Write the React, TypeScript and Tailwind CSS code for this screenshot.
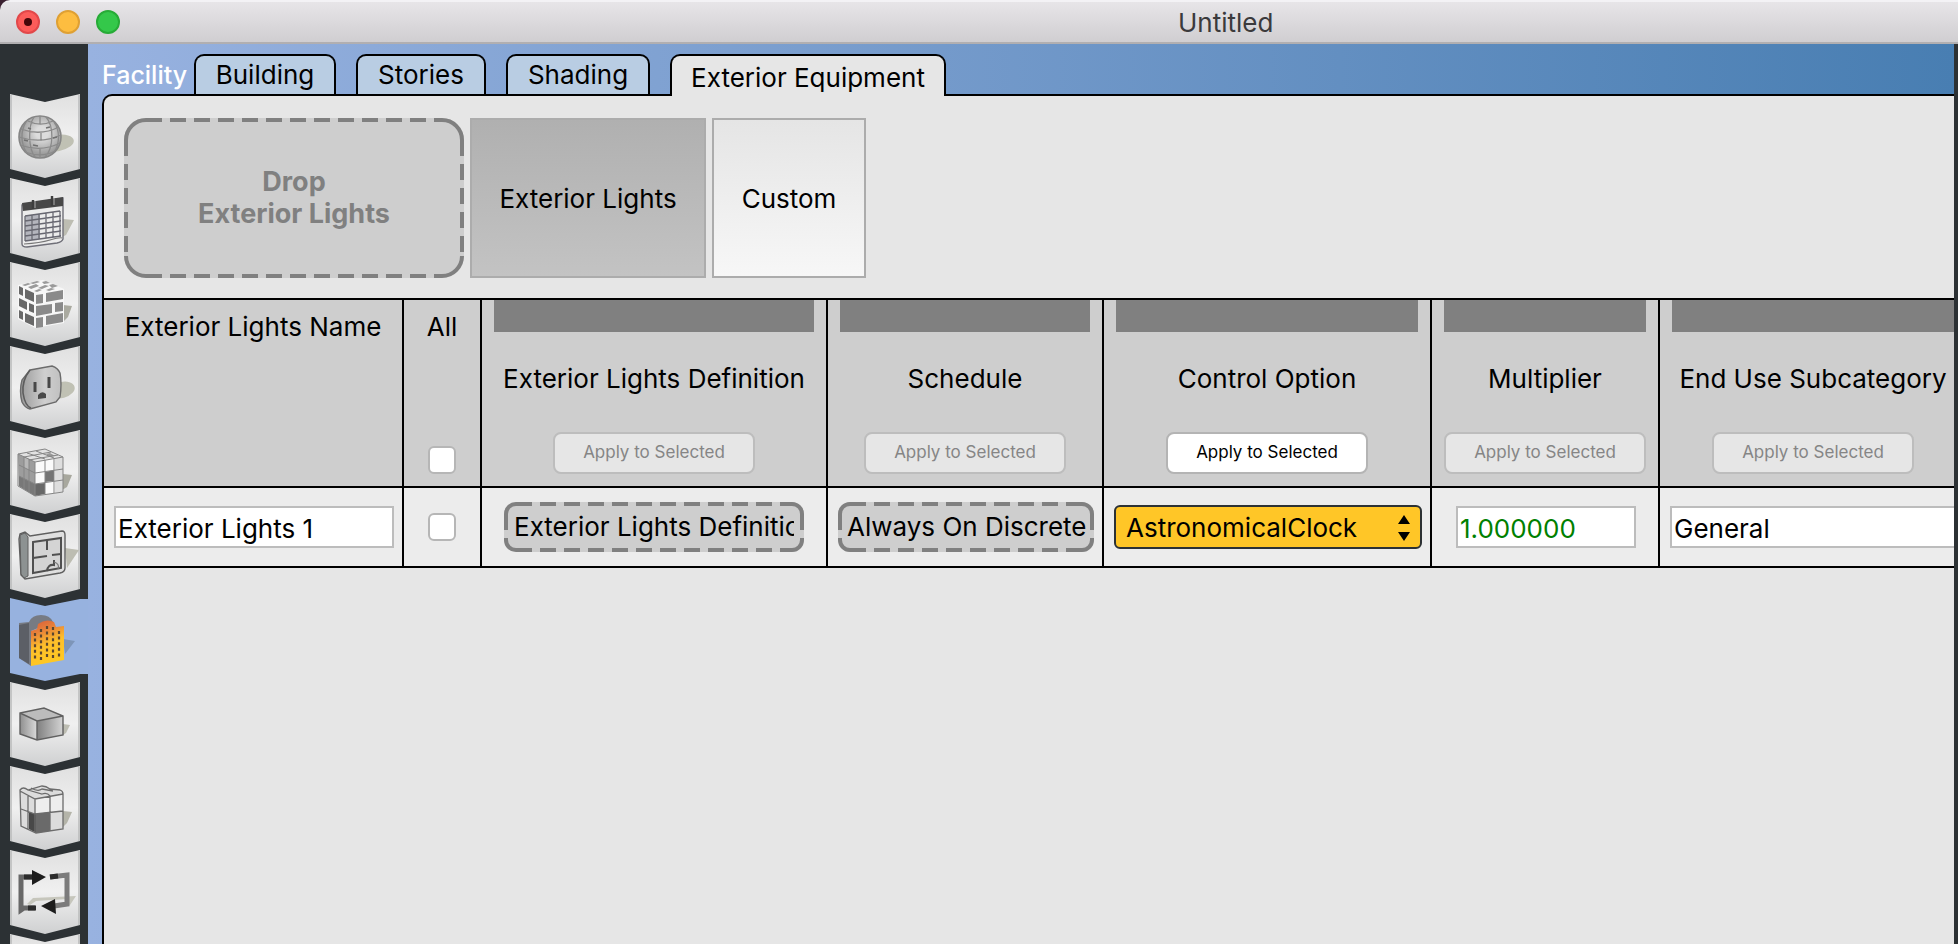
import type { ReactNode } from "react";

const GRAY = "#808080";

function DashedFrame({ w, h, r }: { w: number; h: number; r: number }) {
  const c = r + 2;
  const dash = `M${c} 2H${w - c}M${c} ${h - 2}H${w - c}`;
  const sides = `M2 ${c}V${h - c}M${w - 2} ${c}V${h - c}`;
  const arcs =
    `M2 ${c}A${r} ${r} 0 0 1 ${c} 2` +
    `M${w - c} 2A${r} ${r} 0 0 1 ${w - 2} ${c}` +
    `M${w - 2} ${h - c}A${r} ${r} 0 0 1 ${w - c} ${h - 2}` +
    `M${c} ${h - 2}A${r} ${r} 0 0 1 2 ${h - c}`;
  return (
    <svg className="pointer-events-none absolute inset-0" width={w} height={h} viewBox={`0 0 ${w} ${h}`} fill="none" stroke={GRAY} strokeWidth="4" aria-hidden="true">
      <path d={dash} strokeDasharray="16 8" />
      <path d={sides} strokeDasharray="16 8" />
      <path d={arcs} />
    </svg>
  );
}

const Shadow = ({ d, fill = "#bdbdb2" }: { d: string; fill?: string }) => <path d={d} fill={fill} />;

function SiteIcon() {
  return (
    <g>
      <ellipse cx="58" cy="49" rx="16" ry="8" fill="#c0c1b4" transform="rotate(-10 58 49)" />
      <circle cx="40" cy="43" r="21" fill="url(#ball)" stroke="#858585" strokeWidth="1.6" />
      <path
        d="M34 23C28 32 28 54 35 63M46 23C54 32 54 54 45 63M26 28C20 38 21 51 27 59M54 28C60 36 60 50 54 58M28 27C36 31 45 31 53 27M21 35C34 40 47 39 59 33M19 43C34 48 48 47 61 41M20 51C34 56 48 55 60 49M25 58C36 62 46 62 55 57M40 22V30M41 39V47M40 55V64"
        fill="none"
        stroke="#8a8a8a"
        strokeWidth="1.3"
      />
      <path d="M28 34L31 35M46 34L50 33M24 46L28 47M53 44L57 43M33 51L38 52" stroke="#707070" strokeWidth="1.5" />
    </g>
  );
}

function ScheduleIcon() {
  return (
    <g>
      <Shadow d="M63 41L74 42L66 57L62 59Z" />
      <path d="M22 27L63 20L63 61Q62 64 57 65L27 69Q22 69 22 66Z" fill="#ececec" stroke="#6f6f78" strokeWidth="1.4" />
      <path d="M22 25L63 19L63 28L23 33Z" fill="#484848" />
      <path d="M25 38L40 36V61L25 63Z" fill="#b4b5bd" />
      <path d="M25 38L60 33M25 43L61 38M25 48L61 43M25 53L61 48M25 58L61 53M25 63L61 58M25 38V63M32 37V62M39 36V61M46 35V60M53 34V60M60 33V59" stroke="#686872" strokeWidth="1.3" fill="none" />
      <path d="M24 66Q40 65 50 62T62 60" stroke="#777" strokeWidth="1.2" fill="none" />
      <path d="M33 22V31M52 18V28" stroke="#3d3d3d" strokeWidth="2.4" />
      <path d="M35 23V30M54 20V27" stroke="#9b9b9b" strokeWidth="1.2" />
    </g>
  );
}

function BricksIcon() {
  return (
    <g>
      <Shadow d="M63 43L72 44L68 55L62 61Z" fill="#aaaaa0" />
      <path d="M18 23L43 18L64 27V61L35 66L18 57Z" fill="#f7f7f7" />
      <path d="M19 24L23 26V34L19 32ZM25 27L34 31V40L25 36ZM19 36L27 40V48L19 44ZM29 41L34 43V51L29 49ZM19 48L23 50V58L19 56ZM25 51L34 55V64L25 60Z" fill="#686868" />
      <path d="M36 33L43 32V41L36 42ZM46 31L63 28V37L46 40ZM36 44L52 42V51L36 54ZM55 41L63 40V49L55 50ZM36 56L43 55V65L36 66ZM46 54L63 51V60L46 63Z" fill="#8a8a8a" />
      <path d="M22 23L28 21L31 22L25 24ZM30 21L37 19L40 20L33 22ZM28 25L36 22L39 24L31 27ZM42 20L46 19L50 21L44 22ZM38 26L45 23L49 24L42 27ZM49 23L53 22L58 24L52 26ZM34 29L39 27L42 28L37 30ZM46 28L51 26L55 27L49 29Z" fill="#9a9a9a" />
    </g>
  );
}

function OutletIcon() {
  return (
    <g>
      <ellipse cx="62" cy="44" rx="13" ry="8" fill="#c0c1b4" transform="rotate(-15 62 44)" />
      <path d="M30 24L52 20Q58 22 60 27Q62 38 60 51L56 56L30 63Q25 62 22 56Q19 45 22 34Z" fill="url(#plate)" stroke="#6b6b6b" strokeWidth="1.4" />
      <path d="M30 24Q22 34 23 47Q25 60 31 62" fill="none" stroke="#5c5c5c" strokeWidth="1.6" />
      <path d="M35 36V46M49 31V42" stroke="#484848" strokeWidth="3" />
      <path d="M38 53V49Q42 44 46 48V52Z" fill="#4a4a4a" />
    </g>
  );
}

function LoadsIcon() {
  return (
    <g>
      <Shadow d="M63 44L72 45L67 57L62 60Z" fill="#a8a89e" />
      <path d="M18 24L45 19L63 27L35 32Z" fill="#e2e2e2" />
      <path d="M18 24L35 32V66L19 56Z" fill="#9d9d9d" />
      <path d="M19 46L35 54V66L19 56Z" fill="#787878" />
      <path d="M24 27L29 29V40L24 38Z" fill="#b7b7b7" />
      <path d="M35 32L63 27V62L35 66Z" fill="#fafafa" />
      <path d="M55 28L63 27V62L55 63Z" fill="#dedede" />
      <path d="M45 42L54 40V51L45 52Z" fill="#747474" />
      <path d="M35 54L45 53V64L35 66Z" fill="#686868" />
      <path d="M46 24L50 23L55 26L50 27Z" fill="#999" />
      <path d="M18 24L45 19L63 27L35 32ZM18 24V56L35 66L63 62V27M35 32V66M24 27V59M29 29V62M19 35L35 43L63 39M19 46L35 54L63 50M45 30V64M54 29V63M27 23L45 29M36 21L54 28M24 27L51 22M29 30L58 25" fill="none" stroke="#858585" strokeWidth="1" />
    </g>
  );
}

function SpacesIcon() {
  return (
    <g>
      <Shadow d="M65 34L79 36L67 54Z" />
      <path d="M20 20L25 18L30 22L62 17Q65 17 65 21V54Q65 58 60 59L25 65L21 61L19 25Z" fill="#dfdfdf" stroke="#5f5f5f" strokeWidth="1.4" />
      <path d="M20 21L25 19L28 23V62L24 64L21 60Z" fill="#8d9292" stroke="#5e5e5e" strokeWidth="1" />
      <path d="M33 28L61 24V54L33 59Z" fill="#d4d4d4" stroke="#505050" strokeWidth="2" />
      <path d="M47 26V36M33 44L47 42M52 41L61 40M47 57Q48 50 54 51V46" fill="none" stroke="#505050" strokeWidth="2" />
      <path d="M54 48Q60 50 58 55" fill="none" stroke="#777" strokeWidth="1.2" />
    </g>
  );
}

function FacilityIcon() {
  return (
    <g>
      <Shadow d="M63 41L75 43L65 56Z" fill="#7d95b8" />
      <path d="M19 25L29 24Q32 17 41 17Q50 17 53 24L45 27L31 33V68L19 60Z" fill="#777b83" />
      <path d="M19 27L29 25L29 66L19 60Z" fill="#5c5f66" />
      <path d="M31 33L37 31L38 26Q46 20 54 24L56 29L64 28V62L31 68Z" fill="url(#fac)" />
      <path d="M35 35V63M41 31V62M47 28V61M53 29V60M59 33V59" stroke="#5a4630" strokeWidth="2.2" strokeDasharray="3 2.6" />
    </g>
  );
}

function ZonesBoxIcon() {
  return (
    <g>
      <Shadow d="M63 42L70 43L66 51L63 53Z" />
      <path d="M20 31L44 26L63 34L37 39Z" fill="#bcbcbc" />
      <path d="M20 31L37 39V58L20 52Z" fill="url(#boxl)" />
      <path d="M37 39L63 34V53L37 58Z" fill="url(#boxr)" />
      <path d="M20 31L44 26L63 34V53L37 58L20 52ZM20 31L37 39L63 34M37 39V58" fill="none" stroke="#606060" strokeWidth="1.4" />
    </g>
  );
}

function ThermalIcon() {
  return (
    <g>
      <Shadow d="M63 45L72 46L67 57L62 62Z" fill="#b4b4a9" />
      <path d="M20 24L43 20L63 27V63L36 67L21 60Z" fill="#dcdcdc" />
      <path d="M35 33L63 28V45L35 48Z" fill="#eee" />
      <path d="M29 46L36 48V67L29 63Z" fill="#484848" />
      <path d="M36 48L50 46V65L36 67Z" fill="#6a6a6a" />
      <path d="M20 24Q23 20 28 24L42 20Q46 20 50 23L60 24Q63 25 63 28V63L36 67L21 60ZM20 25L35 33L63 28M35 33V67M50 30V65M21 43L35 48L63 45M28 29V63M28 24L42 28Q47 26 50 30M31 22Q38 26 42 23L53 25" fill="none" stroke="#6c6c6c" strokeWidth="1.3" />
    </g>
  );
}

function HvacIcon() {
  return (
    <g>
      <path d="M27 54L33 48L76 46L70 55L66 54L68 49L36 51L30 55Z" fill="#c6c6bc" />
      <path d="M34 27H21V60L24 58H35" fill="none" stroke="#686868" strokeWidth="5" />
      <path d="M50 27L67 25V54L54 56" fill="none" stroke="#7b7b7b" strokeWidth="5" />
      <path d="M50 27L58 26M28 58H36M24 27H33" stroke="#2c2c2c" strokeWidth="5" />
      <path d="M32 20L46 27L32 35ZM55 49L41 56L56 64Z" fill="#1d1d1d" />
    </g>
  );
}

const tiles: { label: string; icon: ReactNode; active?: boolean }[] = [
  { label: "Site", icon: <SiteIcon /> },
  { label: "Schedules", icon: <ScheduleIcon /> },
  { label: "Constructions", icon: <BricksIcon /> },
  { label: "Loads", icon: <OutletIcon /> },
  { label: "Space Types", icon: <LoadsIcon /> },
  { label: "Geometry", icon: <SpacesIcon /> },
  { label: "Facility", icon: <FacilityIcon />, active: true },
  { label: "Spaces", icon: <ZonesBoxIcon /> },
  { label: "Thermal Zones", icon: <ThermalIcon /> },
  { label: "HVAC Systems", icon: <HvacIcon /> },
  { label: "Output Variables", icon: null },
];

function Gradients() {
  return (
    <svg width="0" height="0" className="absolute" aria-hidden="true">
      <defs>
        <linearGradient id="tile" x1="0" y1="0" x2="0" y2="1">
          <stop offset="0" stopColor="#e0e0e0" />
          <stop offset="0.5" stopColor="#f0f0f0" />
          <stop offset="1" stopColor="#cfd0d1" />
        </linearGradient>
        <radialGradient id="ball" cx="0.55" cy="0.4">
          <stop offset="0.3" stopColor="#dcdcdc" />
          <stop offset="1" stopColor="#9d9d9d" />
        </radialGradient>
        <linearGradient id="plate">
          <stop offset="0" stopColor="#9a9a9a" />
          <stop offset="0.6" stopColor="#cfcfcf" />
          <stop offset="1" stopColor="#c0c0c0" />
        </linearGradient>
        <linearGradient id="fac" x1="0" y1="0" x2="0.3" y2="1">
          <stop offset="0.05" stopColor="#d8603c" />
          <stop offset="0.3" stopColor="#e8823a" />
          <stop offset="0.6" stopColor="#fdbf2b" />
          <stop offset="1" stopColor="#ffc823" />
        </linearGradient>
        <linearGradient id="boxl">
          <stop offset="0" stopColor="#8f8f8f" />
          <stop offset="1" stopColor="#dadada" />
        </linearGradient>
        <linearGradient id="boxr">
          <stop offset="0" stopColor="#808080" />
          <stop offset="1" stopColor="#d4d4d4" />
        </linearGradient>
      </defs>
    </svg>
  );
}

function Sidebar() {
  return (
    <nav aria-label="Model sections" className="flex w-[88px] shrink-0 flex-col overflow-hidden bg-[#2c3134] pt-[50px]">
      <Gradients />
      {tiles.map((t) => (
        <button key={t.label} type="button" aria-label={t.label} className="block shrink-0">
          <svg width="88" height="84" viewBox="0 0 88 84" className="block" aria-hidden="true">
            {t.active ? (
              <path d="M10 0L45 8L80 1H88V76H80L45 83L10 75Z" fill="#97b2df" />
            ) : (
              <>
                <path d="M10 0L45 8L80 0V75L45 84L10 75Z" fill="url(#tile)" />
                <path d="M11 1V75M79 1V75" stroke="#b9babb" strokeWidth="1.5" />
              </>
            )}
            {t.icon}
          </svg>
        </button>
      ))}
    </nav>
  );
}

const tabs = [
  { label: "Building", width: "w-[142px]" },
  { label: "Stories", width: "w-[130px]" },
  { label: "Shading", width: "w-[144px]" },
];

function Tabs() {
  return (
    <div className="flex h-[50px] items-end pl-[14px]">
      <h1 className="h-[40px] w-[92px] text-[25px] leading-[42px] font-medium text-white">Facility</h1>
      <div role="tablist" className="flex items-end gap-[20px]">
        {tabs.map((t) => (
          <button
            key={t.label}
            type="button"
            role="tab"
            aria-selected="false"
            className={`${t.width} h-[40px] rounded-t-[10px] border-2 border-b-0 border-black bg-[#b9cde3] leading-[38px]`}
          >
            {t.label}
          </button>
        ))}
        <button
          type="button"
          role="tab"
          aria-selected="true"
          className="relative -mb-[2px] h-[42px] w-[276px] rounded-t-[10px] border-2 border-b-0 border-black bg-[#e6e6e6] pt-[2px] leading-[40px]"
        >
          Exterior Equipment
        </button>
      </div>
    </div>
  );
}

const columns = [
  { label: "Exterior Lights Definition", enabled: false },
  { label: "Schedule", enabled: false },
  { label: "Control Option", enabled: true },
  { label: "Multiplier", enabled: false },
  { label: "End Use Subcategory", enabled: false },
];

const CHECK = "block size-[28px] appearance-none rounded-[6px] border-2 border-[#b6b6b6] bg-white";
const FIELD = "block h-[42px] border-2 border-[#bcbcbc] bg-white px-[2px] pt-[2px] outline-none";
const CELL = "border-r-2 border-b-2 border-black p-0";

function LightsTable() {
  return (
    <table className="w-full min-w-[1864px] table-fixed border-separate border-spacing-0">
      <colgroup>
        <col className="w-[300px]" />
        <col className="w-[78px]" />
        <col className="w-[346px]" />
        <col className="w-[276px]" />
        <col className="w-[328px]" />
        <col className="w-[228px]" />
        <col />
      </colgroup>
      <thead>
        <tr className="bg-[#cecece] align-top">
          <th scope="col" className={`${CELL} font-normal`}>
            <div className="pt-[11px]">Exterior Lights Name</div>
          </th>
          <th scope="col" className={`${CELL} font-normal`}>
            <label className="flex h-[186px] flex-col items-center justify-between pt-[11px] pb-[12px]">
              All
              <input type="checkbox" className={CHECK} />
            </label>
          </th>
          {columns.map((c) => (
            <th key={c.label} scope="col" className={`${CELL} font-normal`}>
              <div className="flex h-[186px] flex-col items-center px-[12px] pb-[12px]">
                <div className="h-[32px] w-full bg-[#808080]" />
                <span className="mt-[31px] whitespace-nowrap">{c.label}</span>
                <button
                  type="button"
                  disabled={!c.enabled}
                  className="mt-auto h-[42px] w-[202px] rounded-[8px] border-2 border-[#b4b4b4] bg-white pb-[2px] text-[17px] leading-[34px] text-black disabled:border-[#bdbdbd] disabled:bg-[#e6e6e6] disabled:text-[#858585]"
                >
                  Apply to Selected
                </button>
              </div>
            </th>
          ))}
        </tr>
      </thead>
      <tbody>
        <tr className="h-[80px] bg-[#ececec]">
          <td className={`${CELL} pl-[10px]`}>
            <input aria-label="Exterior Lights Name" defaultValue="Exterior Lights 1" className={`${FIELD} w-[280px]`} />
          </td>
          <td className={`${CELL} pl-[24px]`}>
            <input type="checkbox" aria-label="Select Exterior Lights 1" className={CHECK} />
          </td>
          <td className={`${CELL} pl-[22px]`}>
            <div className="relative h-[50px] w-[300px] rounded-[12px] bg-[#cecece] px-[10px]">
              <DashedFrame w={300} h={50} r={10} />
              <div className="overflow-hidden leading-[50px] whitespace-nowrap">Exterior Lights Definition</div>
            </div>
          </td>
          <td className={`${CELL} pl-[10px]`}>
            <div className="relative h-[50px] w-[256px] rounded-[12px] bg-[#cecece] pr-[4px] pl-[9px]">
              <DashedFrame w={256} h={50} r={10} />
              <div className="overflow-hidden leading-[50px] whitespace-nowrap">Always On Discrete</div>
            </div>
          </td>
          <td className={`${CELL} pl-[10px]`}>
            <div className="relative w-[308px]">
              <select
                aria-label="Control Option"
                className="block h-[44px] w-full appearance-none rounded-[6px] border-2 border-[#2c3134] bg-[#ffc627] pt-[2px] pl-[10px] text-black outline-none"
              >
                <option>AstronomicalClock</option>
                <option>ScheduleNameOnly</option>
              </select>
              <svg className="pointer-events-none absolute top-[10px] right-[12px]" width="12" height="26" viewBox="0 0 12 26" aria-hidden="true">
                <path d="M6 0L12 9H0ZM6 26L12 17H0Z" fill="#000" />
              </svg>
            </div>
          </td>
          <td className={`${CELL} pl-[24px]`}>
            <input aria-label="Multiplier" defaultValue="1.000000" className={`${FIELD} w-[180px] text-[#008000]`} />
          </td>
          <td className={`${CELL} pl-[10px]`}>
            <input aria-label="End Use Subcategory" defaultValue="General" className={`${FIELD} w-full`} />
          </td>
        </tr>
      </tbody>
    </table>
  );
}

export default function App() {
  return (
    <div className="h-screen overflow-hidden bg-[#3a2030] font-[Inter,'Liberation_Sans',sans-serif] text-[26px] leading-[32px] text-black">
      <div className="flex h-full flex-col overflow-hidden rounded-tl-[10px]">
        <header className="flex h-[44px] shrink-0 items-center border-t-2 border-b-2 border-t-[#f3f2f5] border-b-[#b1afb1] bg-linear-to-b from-[#e7e5e8] to-[#d0ced1] pl-[16px]">
          <div className="flex gap-[16px]">
            <button type="button" aria-label="Close" className="flex size-[24px] items-center justify-center rounded-full border-2 border-[#e2484a] bg-[#fc5c5a]">
              <span className="size-[8px] rounded-full bg-[#45070a]" />
            </button>
            <button type="button" aria-label="Minimize" className="size-[24px] rounded-full border-2 border-[#dfa033] bg-[#fdbd40]" />
            <button type="button" aria-label="Zoom" className="size-[24px] rounded-full border-2 border-[#27ab37] bg-[#34c84a]" />
          </div>
          <div className="ml-[1058px] pt-[2px] text-[#3b3a3c]">Untitled</div>
        </header>

        <div className="flex min-h-0 flex-1 bg-[#2c3134] pr-[4px]">
          <Sidebar />
          <main className="flex min-w-0 flex-1 flex-col bg-linear-to-r from-[#98b2e0] to-[#487eb2]">
            <Tabs />
            <div className="flex flex-1 flex-col pl-[14px]">
              <section className="flex-1 overflow-hidden rounded-tl-[10px] border-t-2 border-l-2 border-black bg-[#e6e6e6]">
                <div className="flex gap-[6px] border-b-2 border-black pt-[22px] pb-[20px] pl-[20px]">
                  <div className="relative flex h-[160px] w-[340px] flex-col justify-center rounded-[22px] bg-[#cecece] text-center text-[27px] font-bold text-[#808080]">
                    <DashedFrame w={340} h={160} r={20} />
                    <span>Drop</span>
                    <span>Exterior Lights</span>
                  </div>
                  <button type="button" className="h-[160px] w-[236px] border-2 border-[#acacac] bg-linear-to-b from-[#b0b0b0] to-[#c3c3c3] pt-[2px]">
                    Exterior Lights
                  </button>
                  <button type="button" className="h-[160px] w-[154px] border-2 border-[#acacac] bg-linear-to-b from-[#e5e5e5] to-[#f7f7f7] pt-[2px]">
                    Custom
                  </button>
                </div>
                <LightsTable />
              </section>
            </div>
          </main>
        </div>
      </div>
    </div>
  );
}
